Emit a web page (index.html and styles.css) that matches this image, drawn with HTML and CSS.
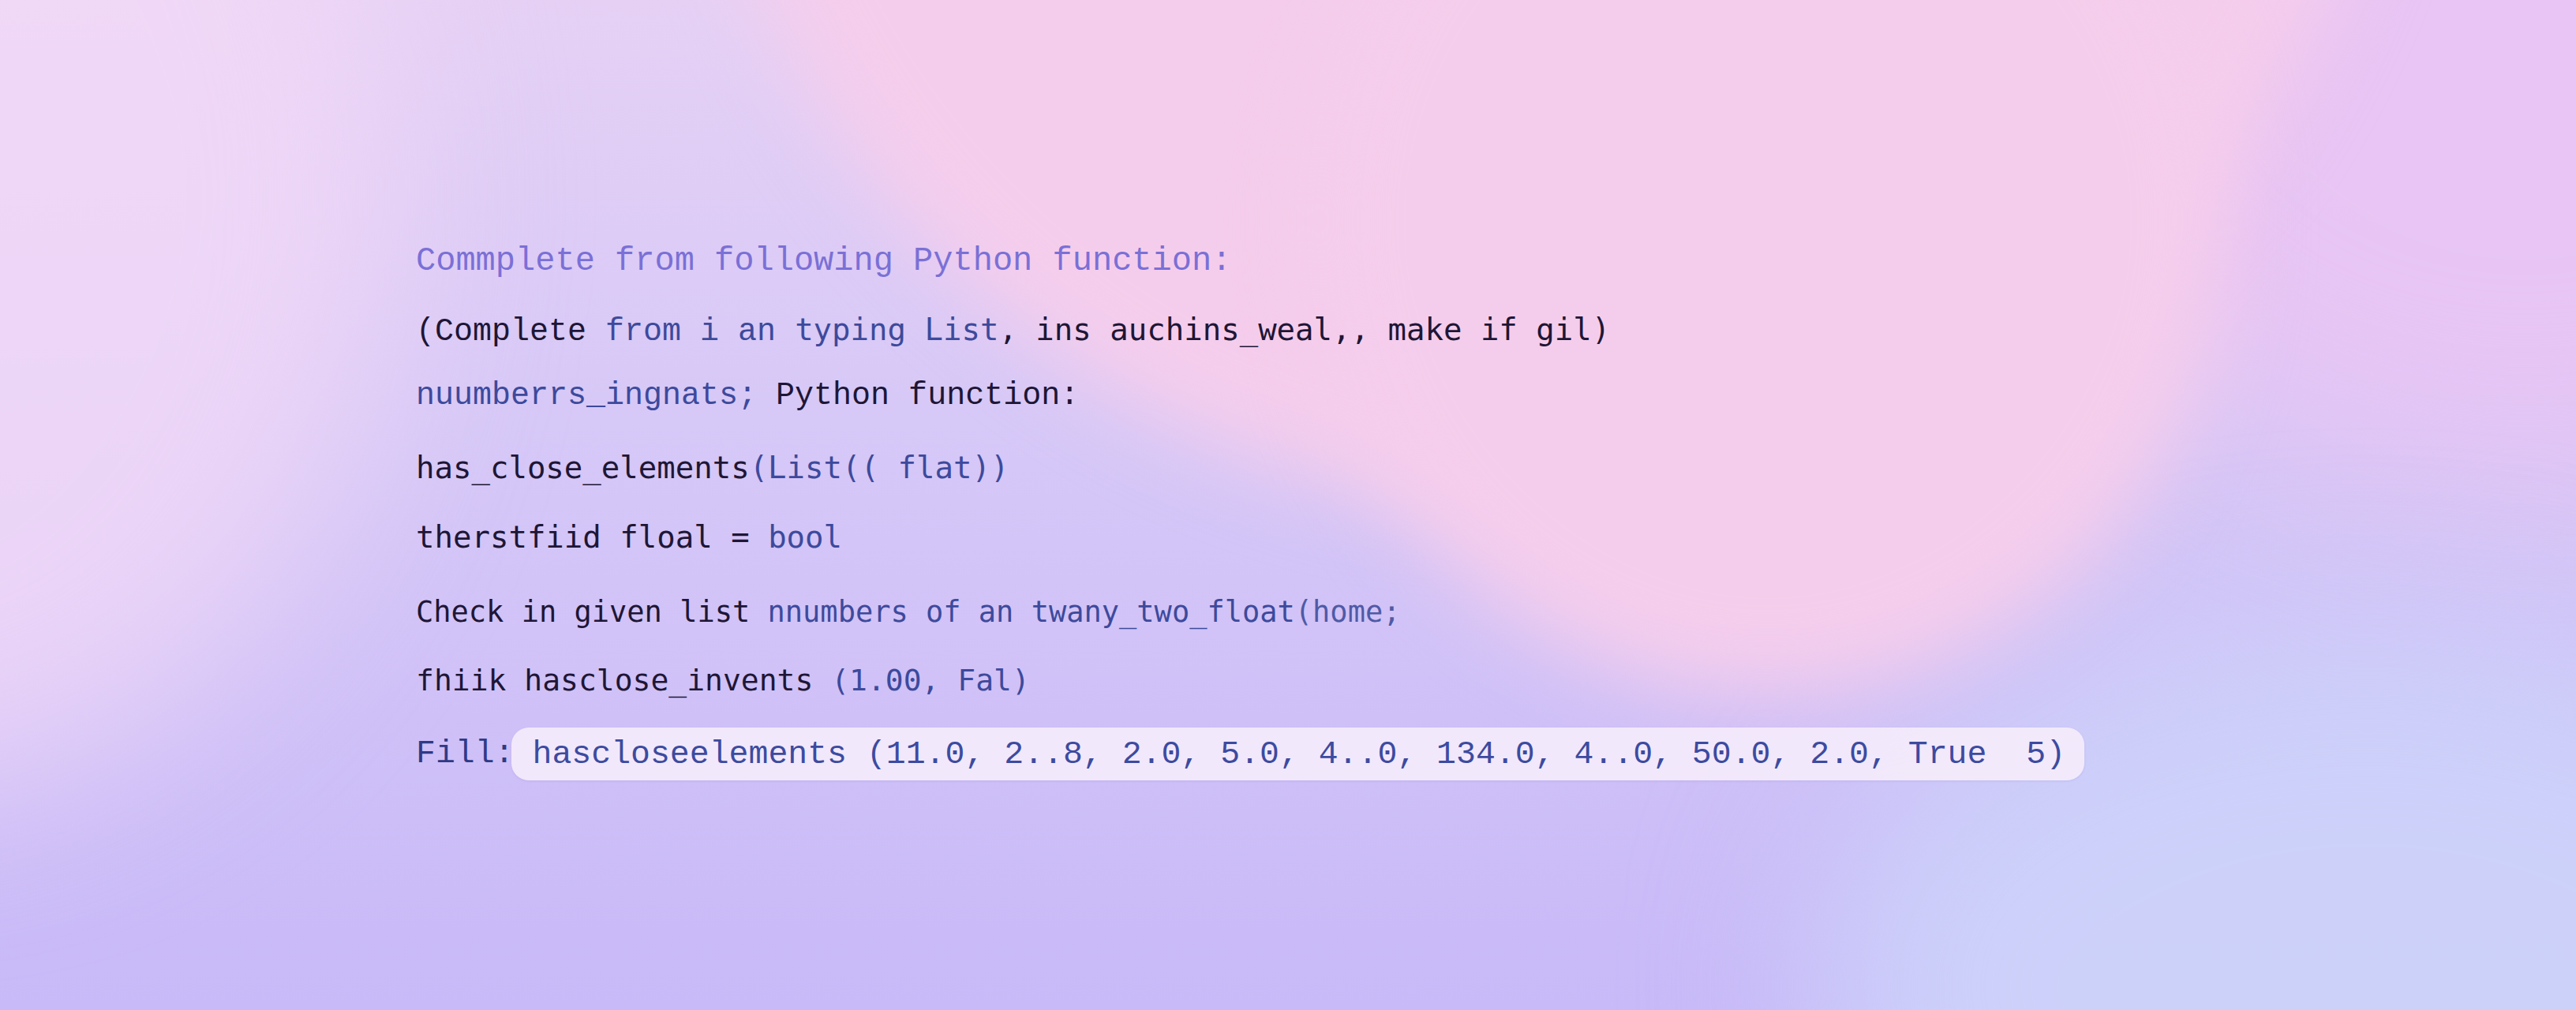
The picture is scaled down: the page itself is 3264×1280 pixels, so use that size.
FILE: index.html
```html
<!DOCTYPE html>
<html lang="en">
<head>
<meta charset="utf-8">
<title>Python function</title>
<link rel="stylesheet" href="styles.css">
</head>
<body>
<main class="stage">
  <div class="backdrop" aria-hidden="true">
    <div class="glow glow-left"></div>
    <div class="glow glow-right"></div>
    <div class="glow glow-br"></div>
    <div class="blob blob-top"></div>
    <div class="blob blob-tail"></div>
  </div>
  <div class="code">
    <p class="line l1 serif">Commplete from following Python function:</p>
    <p class="line l2"><span class="serif">(<span class="dk">Complete</span> <span class="bl">from i an</span> </span><span class="sans"><span class="bl">typing List</span><span class="dk">, ins auchins_weal,, make if gil)</span></span></p>
    <p class="line l3 serif"><span class="bl">nuumberrs_ingnats;</span> <span class="dk">Python function:</span></p>
    <p class="line l4 sans"><span class="dk">has_close_elements</span><span class="bl">(List(( flat))</span></p>
    <p class="line l5 sans"><span class="dk">therstfiid floal = </span><span class="bl">bool</span></p>
    <p class="line l6 sans"><span class="dk">Check in given list </span><span class="bl">nnumbers of an twany_two_float</span><span class="bl2">(home;</span></p>
    <p class="line l7 sans"><span class="dk">fhiik hasclose_invents </span><span class="bl">(1.00, Fal)</span></p>
    <p class="line l8 serif"><span class="fill">Fill:</span><span class="pill">hascloseelements (11.0, 2..8, 2.0, 5.0, 4..0, 134.0, 4..0, 50.0, 2.0, True  5)</span></p>
  </div>
</main>
</body>
</html>
```
FILE: styles.css
```css
html, body {
  margin: 0;
  padding: 0;
}
body {
  width: 3264px;
  height: 1280px;
  overflow: hidden;
  background: #cdc2f6;
}
.stage {
  position: relative;
  width: 3264px;
  height: 1280px;
  overflow: hidden;
  background: linear-gradient(180deg, #e6d1f5 0%, #d6c8f7 42%, #c8b9f8 100%);
  display: flex;
  flex-direction: column;
}
.backdrop {
  position: absolute;
  inset: 0;
  overflow: hidden;
  z-index: 0;
}
.glow {
  position: absolute;
  border-radius: 50%;
  filter: blur(110px);
}
.glow-left {
  left: -750px;
  top: -500px;
  width: 1250px;
  height: 1500px;
  background: rgba(243, 218, 247, 0.75);
}
.glow-right {
  left: 2550px;
  top: -500px;
  width: 1300px;
  height: 1100px;
  background: rgba(232, 196, 243, 0.95);
}
.glow-br {
  left: 2300px;
  top: 800px;
  width: 1400px;
  height: 900px;
  background: rgba(204, 210, 250, 0.95);
}
.blob {
  position: absolute;
  border-radius: 50%;
  background: #f5cdec;
  filter: blur(50px);
}
.blob-top {
  left: 880px;
  top: -1520px;
  width: 2160px;
  height: 2166px;
}
.blob-tail {
  left: 1660px;
  top: -320px;
  width: 1160px;
  height: 1200px;
}
.code {
  position: relative;
  z-index: 1;
  padding: 287px 0 0 527px;
  display: flex;
  flex-direction: column;
}
.line {
  margin: 0;
  height: 89px;
  line-height: 88px;
  white-space: pre;
  color: #1e1636;
}
.serif {
  font-family: "Liberation Mono", "Courier New", monospace;
}
.sans {
  font-family: "DejaVu Sans Mono", monospace;
}
.dk { color: #1e1636; }
.bl { color: #3d4a9c; }
.bl2 { color: #4f5aa6; }
.l1 {
  font-size: 42px;
  color: #7a70d6;
  height: 87px;
}
.l2 { font-size: 40px; height: 84px; }
.l2 .sans { font-size: 39px; }
.l3 { font-size: 40px; height: 91px; }
.l4 { font-size: 39px; height: 88px; }
.l5 { font-size: 39px; height: 95px; }
.l6 { font-size: 37px; height: 86px; }
.l7 { font-size: 38px; height: 93px; }
.l8 {
  font-size: 41.5px;
  display: flex;
  align-items: center;
  height: 88px;
}
.fill {
  color: #2f3a85;
}
.pill {
  display: inline-block;
  color: #3c4ba0;
  background: rgba(248, 238, 252, 0.85);
  border-radius: 22px;
  height: 67px;
  line-height: 67px;
  padding: 0 24px 0 27px;
  margin-left: -4px;
  box-shadow: 0 1px 3px rgba(120, 100, 200, 0.15);
}
```
